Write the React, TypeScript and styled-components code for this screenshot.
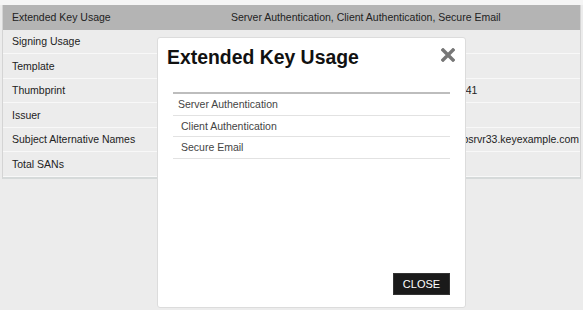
import React from "react";
import styled, { createGlobalStyle } from "styled-components";

const Global = createGlobalStyle`
  html, body { margin: 0; padding: 0; }
  body {
    background: #ececec;
    font-family: "Liberation Sans", Arial, sans-serif;
    width: 583px;
    height: 310px;
    overflow: hidden;
  }
`;

const Page = styled.div`
  position: relative;
  width: 583px;
  height: 310px;
`;

const TopStrip = styled.div`
  height: 5px;
  background: #f5f5f5;
`;

const Table = styled.div`
  margin: 0 2px;
  border-left: 1px solid #d4d4d4;
  border-right: 1px solid #d4d4d4;
  border-bottom: 2px solid #d6dada;
  overflow: hidden;
`;

const Row = styled.div<{ $active?: boolean }>`
  display: grid;
  grid-template-columns: 228px 1fr;
  height: 24.5px;
  box-sizing: border-box;
  align-items: center;
  background: ${(p) => (p.$active ? "#b4b4b4" : "#ececec")};
  border-bottom: 1px solid ${(p) => (p.$active ? "#b4b4b4" : "#f8f8f8")};
  font-size: 10.5px;
  color: #222;
  white-space: nowrap;
`;

const Label = styled.div`
  padding-left: 9px;
`;

const Value = styled.div`
  overflow: hidden;
`;

const Modal = styled.div`
  position: absolute;
  left: 157px;
  top: 37px;
  width: 309px;
  height: 271px;
  box-sizing: border-box;
  background: #fff;
  border: 1px solid #dcdcdc;
  border-radius: 3px;
  display: flex;
  flex-direction: column;
  padding: 0 15px 12px 9px;
`;

const Header = styled.div`
  display: flex;
  justify-content: space-between;
  align-items: flex-start;
  height: 44px;
`;

const Title = styled.h2`
  margin: 7px 0 0 0;
  font-size: 19.4px;
  font-weight: bold;
  color: #111;
  line-height: 24px;
`;

const CloseX = styled.button`
  margin-top: 10px;
  margin-right: -5px;
  padding: 0;
  border: 0;
  background: none;
  width: 14px;
  height: 14px;
  display: flex;
`;

const List = styled.ul`
  list-style: none;
  margin: 10px 0 0 6px;
  padding: 0;
  width: 277px;
  border-top: 2px solid #bdbdbd;
`;

const Item = styled.li<{ $indent?: number }>`
  height: 21.5px;
  box-sizing: border-box;
  border-bottom: 1px solid #e2e2e2;
  display: flex;
  align-items: center;
  padding-left: ${(p) => p.$indent ?? 5}px;
  font-size: 10.5px;
  color: #444;
`;

const Footer = styled.div`
  margin-top: auto;
  display: flex;
  justify-content: flex-end;
`;

const CloseButton = styled.button`
  width: 57px;
  height: 22px;
  background: #1a1a1a;
  color: #fff;
  border: 1px solid #333;
  font-family: "Liberation Sans", Arial, sans-serif;
  font-size: 11px;
  padding: 0;
  margin-right: 0;
`;

const rows: [string, string][] = [
  ["Extended Key Usage", "Server Authentication, Client Authentication, Secure Email"],
  ["Signing Usage", "Digital Signature, Key Encipherment"],
  ["Template", "WebServer"],
  ["Thumbprint", "6D2F8A91C03B47E5D8A1F0C9B2E7A4D35F80041"],
  ["Issuer", "CN=KeyExample Issuing CA"],
  ["Subject Alternative Names", "DNS Name=webapps01.keyexample.com, webappsrvr33.keyexample.com"],
  ["Total SANs", "2"],
];

export default function App() {
  return (
    <Page>
      <Global />
      <TopStrip />
      <Table>
        {rows.map(([k, v], i) => (
          <Row key={k} $active={i === 0}>
            <Label>{k}</Label>
            <Value>{v}</Value>
          </Row>
        ))}
      </Table>
      <Modal>
        <Header>
          <Title>Extended Key Usage</Title>
          <CloseX aria-label="Close">
            <svg width="14" height="14" viewBox="0 0 14 14">
              <path d="M2 2 L12 12 M12 2 L2 12" stroke="#777" strokeWidth="3.4" strokeLinecap="square" />
            </svg>
          </CloseX>
        </Header>
        <List>
          <Item $indent={5}>Server Authentication</Item>
          <Item $indent={8}>Client Authentication</Item>
          <Item $indent={8}>Secure Email</Item>
        </List>
        <Footer>
          <CloseButton>CLOSE</CloseButton>
        </Footer>
      </Modal>
    </Page>
  );
}
